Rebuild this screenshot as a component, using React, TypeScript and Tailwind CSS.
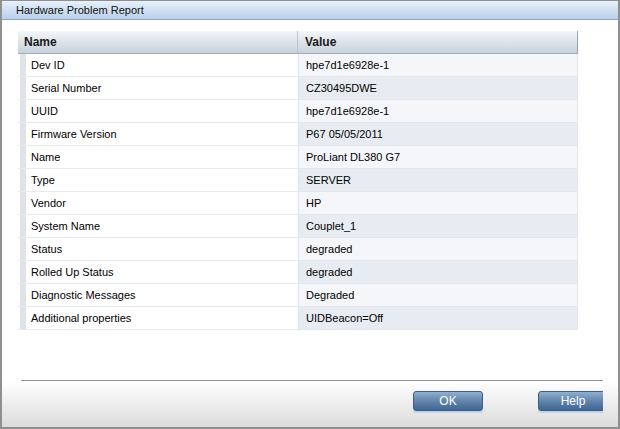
import React from "react";

const rows: [string, string][] = [
  ["Dev ID", "hpe7d1e6928e-1"],
  ["Serial Number", "CZ30495DWE"],
  ["UUID", "hpe7d1e6928e-1"],
  ["Firmware Version", "P67 05/05/2011"],
  ["Name", "ProLiant DL380 G7"],
  ["Type", "SERVER"],
  ["Vendor", "HP"],
  ["System Name", "Couplet_1"],
  ["Status", "degraded"],
  ["Rolled Up Status", "degraded"],
  ["Diagnostic Messages", "Degraded"],
  ["Additional properties", "UIDBeacon=Off"],
];

function Btn({ label }: { label: string }) {
  return (
    <div className="h-[20px] w-[70px] shrink-0 rounded-[3px] border border-[#3d5f86] bg-linear-to-b from-[#93afcc] via-[#6185ad] to-[#3f6591] text-white text-[12px] flex items-center justify-center shadow-[0_2px_0_#bfd4ea]">
      {label}
    </div>
  );
}

export default function App() {
  return (
    <div className="w-[620px] h-[429px] flex flex-col bg-white border-x-2 border-b-2 border-t border-[#8f8f8f] font-['Liberation_Sans',Arial,sans-serif] text-[11px] text-black overflow-hidden">
      <div className="h-[19px] shrink-0 flex items-center pl-[14px] bg-linear-to-b from-[#e8f0fa] to-[#b9cfe9] border-b border-[#8ea9c8] text-[#111]">
        Hardware Problem Report
      </div>
      <div className="pl-[16px] pt-[11px] shrink-0">
        <div className="w-[560px]">
          <div className="flex h-[23px] bg-linear-to-b from-[#f4f6f9] to-[#c8d1db] border-b border-[#a3adb9] border-r border-r-[#9aa4b0] font-bold text-[12px] text-[#1a1a1a]">
            <div className="w-[280px] pl-[6px] flex items-center border-r border-[#bcc5cf]">Name</div>
            <div className="flex-1 pl-[7px] flex items-center">Value</div>
          </div>
          {rows.map(([k, v], i) => (
            <div key={k} className="flex h-[23px]">
              <div className="w-[280px] flex border-b border-[#e6e9ed]">
                <div className="w-[2px] bg-white" />
                <div className="w-[6px] bg-[#dfe2e6]" />
                <div className="flex-1 pl-[5px] flex items-center bg-white">{k}</div>
              </div>
              <div
                className={
                  "flex-1 pl-[7px] flex items-center border-b border-l border-r border-[#e3e7ec] " +
                  (i % 2 === 0 ? "bg-[#f4f6f9]" : "bg-[#e7ecf2]")
                }
              >
                {v}
              </div>
            </div>
          ))}
        </div>
      </div>
      <div className="flex-1" />
      <div className="ml-[19px] mr-[15px] h-px bg-[#8c9198] shrink-0" />
      <div className="h-[46px] shrink-0 bg-linear-to-b from-white to-[#dcdcdc]">
        <div className="flex pl-[411px] gap-[55px] w-[601px] overflow-hidden pt-[10px] pb-[3px]">
          <Btn label="OK" />
          <Btn label="Help" />
        </div>
      </div>
    </div>
  );
}
